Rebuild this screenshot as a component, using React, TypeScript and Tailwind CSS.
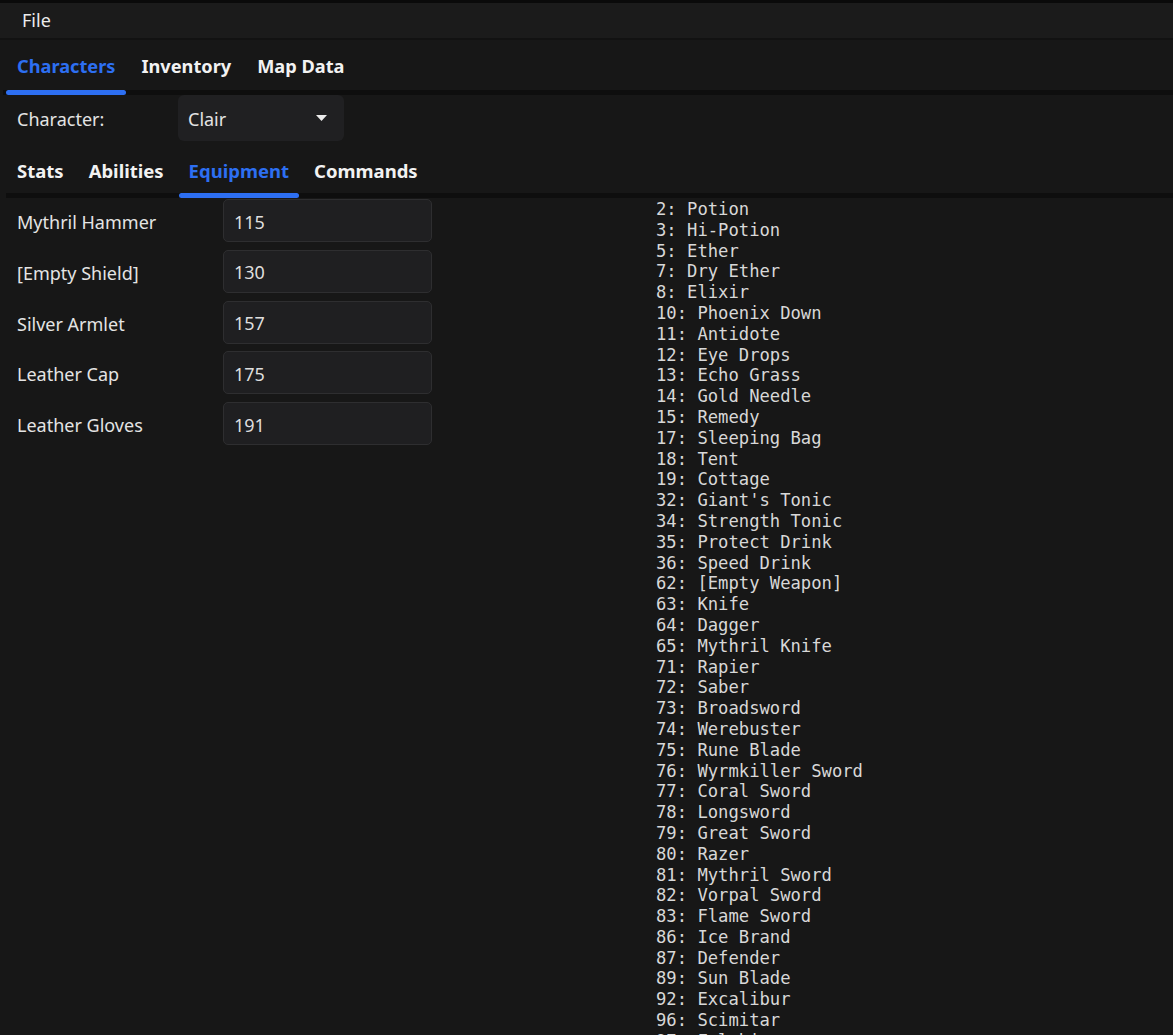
import React from "react";

const items = [
  "2: Potion",
  "3: Hi-Potion",
  "5: Ether",
  "7: Dry Ether",
  "8: Elixir",
  "10: Phoenix Down",
  "11: Antidote",
  "12: Eye Drops",
  "13: Echo Grass",
  "14: Gold Needle",
  "15: Remedy",
  "17: Sleeping Bag",
  "18: Tent",
  "19: Cottage",
  "32: Giant's Tonic",
  "34: Strength Tonic",
  "35: Protect Drink",
  "36: Speed Drink",
  "62: [Empty Weapon]",
  "63: Knife",
  "64: Dagger",
  "65: Mythril Knife",
  "71: Rapier",
  "72: Saber",
  "73: Broadsword",
  "74: Werebuster",
  "75: Rune Blade",
  "76: Wyrmkiller Sword",
  "77: Coral Sword",
  "78: Longsword",
  "79: Great Sword",
  "80: Razer",
  "81: Mythril Sword",
  "82: Vorpal Sword",
  "83: Flame Sword",
  "86: Ice Brand",
  "87: Defender",
  "89: Sun Blade",
  "92: Excalibur",
  "96: Scimitar",
  "97: Falchion",
  "98: Ogrekiller",
];

const equipment = [
  ["Mythril Hammer", "115"],
  ["[Empty Shield]", "130"],
  ["Silver Armlet", "157"],
  ["Leather Cap", "175"],
  ["Leather Gloves", "191"],
];

function Tab({ label, active, px, size }: { label: string; active?: boolean; px: string; size: string }) {
  return (
    <div className={`relative h-full flex items-center ${px}`}>
      <span className={`font-bold ${size} ${active ? "text-[#2d6ff2]" : "text-[#f2f2f2]"}`}>{label}</span>
      {active && (
        <div className="absolute left-0 right-0 bottom-[-5px] h-[5px] rounded-full bg-[#2d6ff2]" />
      )}
    </div>
  );
}

export default function App() {
  return (
    <div
      className="w-[1173px] h-[1035px] overflow-hidden bg-[#171717] text-[18px] text-[#e4e4e4]"
      style={{ fontFamily: '"Noto Sans", "Open Sans", sans-serif' }}
    >
      <div className="h-[3px] bg-[#0a0a0a]" />
      <div className="h-[35px] bg-[#1b1b1b] flex items-center pl-[22px] text-[#ececec]">File</div>
      <div className="h-[2px] bg-[#121212]" />
      {/* main tabs */}
      <div className="h-[50px] flex items-stretch pl-[6px] gap-[4px] pt-[4px]">
        <Tab label="Characters" active px="px-[11px]" size="text-[18.2px]" />
        <Tab label="Inventory" px="px-[11px]" size="text-[18.2px]" />
        <Tab label="Map Data" px="px-[11px]" size="text-[18.2px]" />
      </div>
      <div className="h-[5px] bg-[#0e0e0e] ml-[3px]" />
      {/* character select */}
      <div className="h-[46px] flex items-center">
        <div className="w-[178px] pl-[17px] pt-[2px] text-[#e4e4e4]">Character:</div>
        <div className="w-[166px] h-[46px] rounded-[6px] bg-[#202022] flex items-center justify-between pl-[10px] pr-[17px]">
          <span className="text-[#e4e4e4] pt-[2px]">Clair</span>
          <svg width="11" height="6" viewBox="0 0 11 6">
            <path d="M0 0 L11 0 L5.5 6 Z" fill="#ececec" />
          </svg>
        </div>
      </div>
      {/* sub tabs */}
      <div className="h-[52px] flex items-stretch pl-[7px] gap-[5px] pt-[8px]">
        <Tab label="Stats" px="px-[10px]" size="text-[18.5px]" />
        <Tab label="Abilities" px="px-[10px]" size="text-[18.5px]" />
        <Tab label="Equipment" active px="px-[10px]" size="text-[18.5px]" />
        <Tab label="Commands" px="px-[10px]" size="text-[18.5px]" />
      </div>
      <div className="h-[5px] bg-[#0e0e0e] ml-[6px]" />
      {/* content */}
      <div className="flex">
        <div className="w-[656px] shrink-0 flex flex-col gap-[7.75px] pt-[1px]">
          {equipment.map(([name, val]) => (
            <div key={name} className="flex items-center h-[43px]">
              <div className="w-[223px] pl-[17px] pt-[4px] text-[#e4e4e4]">{name}</div>
              <div className="w-[209px] h-[43px] rounded-[5px] bg-[#1f1f21] border border-[#2e2e30] flex items-center pl-[10px] pt-[3px] text-[#dedede]">
                {val}
              </div>
            </div>
          ))}
        </div>
        <div
          className="flex flex-col text-[17.2px] leading-[20.8px] text-[#d8d8d8] whitespace-pre pt-[1px]"
          style={{ fontFamily: '"DejaVu Sans Mono", "Liberation Mono", monospace' }}
        >
          {items.map((it) => (
            <div key={it}>{it}</div>
          ))}
        </div>
      </div>
    </div>
  );
}
